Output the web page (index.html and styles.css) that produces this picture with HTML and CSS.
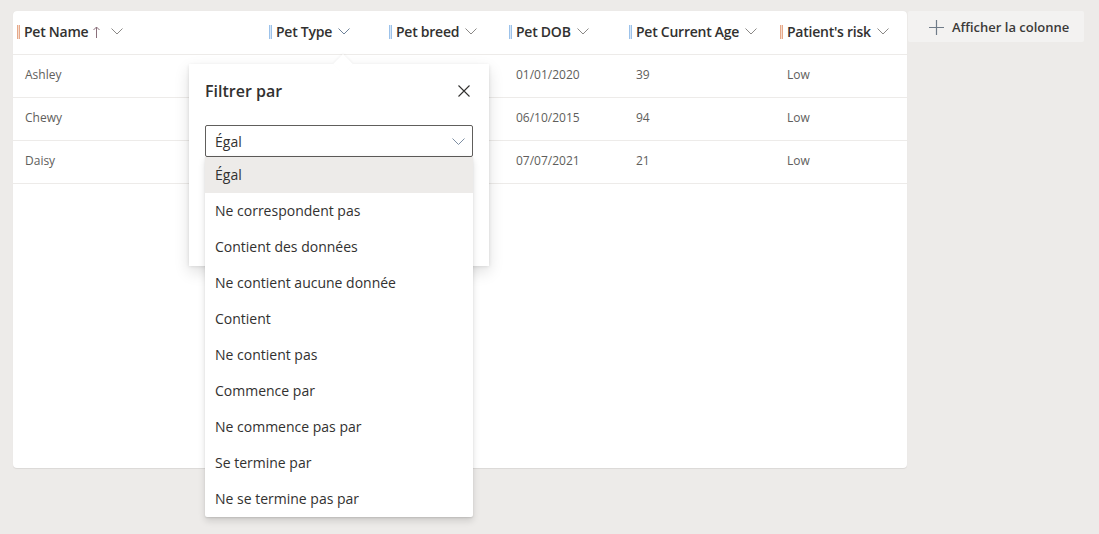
FILE: index.html
```html
<!DOCTYPE html>
<html lang="fr">
<head>
  <meta charset="UTF-8">
  <meta name="viewport" content="width=device-width, initial-scale=1.0">
  <title>Pets</title>
  <link rel="stylesheet" href="styles.css">
</head>
<body>
  <div class="page">
    <div class="grid-card">
      <div class="grid-row grid-head">
        <div class="col col-first"><span class="marker marker-warm"></span><span class="col-title">Pet Name</span>
          <svg class="sort-icon" width="7" height="12" viewBox="0 0 7 12"><path d="M3.5 1v11M0.5 4L3.5 1l3 3" fill="none" stroke="#8a6f7a" stroke-width="1"/></svg>
          <svg class="chev" width="12" height="7" viewBox="0 0 12 7"><path d="M0.5 0.5l5.5 5.5 5.5-5.5" fill="none" stroke="#8a8886" stroke-width="1"/></svg>
        </div>
        <div class="col"><span class="marker marker-cool"></span><span class="col-title">Pet Type</span>
          <svg class="chev" width="12" height="7" viewBox="0 0 12 7"><path d="M0.5 0.5l5.5 5.5 5.5-5.5" fill="none" stroke="#6e8299" stroke-width="1"/></svg>
        </div>
        <div class="col"><span class="marker marker-cool"></span><span class="col-title">Pet breed</span>
          <svg class="chev" width="12" height="7" viewBox="0 0 12 7"><path d="M0.5 0.5l5.5 5.5 5.5-5.5" fill="none" stroke="#8a8886" stroke-width="1"/></svg>
        </div>
        <div class="col"><span class="marker marker-cool"></span><span class="col-title">Pet DOB</span>
          <svg class="chev" width="12" height="7" viewBox="0 0 12 7"><path d="M0.5 0.5l5.5 5.5 5.5-5.5" fill="none" stroke="#8a8886" stroke-width="1"/></svg>
        </div>
        <div class="col"><span class="marker marker-cool"></span><span class="col-title">Pet Current Age</span>
          <svg class="chev" width="12" height="7" viewBox="0 0 12 7"><path d="M0.5 0.5l5.5 5.5 5.5-5.5" fill="none" stroke="#8a8886" stroke-width="1"/></svg>
        </div>
        <div class="col"><span class="marker marker-warm"></span><span class="col-title">Patient's risk</span>
          <svg class="chev" width="12" height="7" viewBox="0 0 12 7"><path d="M0.5 0.5l5.5 5.5 5.5-5.5" fill="none" stroke="#8a8886" stroke-width="1"/></svg>
        </div>
      </div>

      <div class="grid-row">
        <div class="cell cell-first">Ashley</div><div class="cell"></div><div class="cell"></div>
        <div class="cell">01/01/2020</div><div class="cell">39</div><div class="cell">Low</div>
      </div>
      <div class="grid-row">
        <div class="cell cell-first">Chewy</div><div class="cell"></div><div class="cell"></div>
        <div class="cell">06/10/2015</div><div class="cell">94</div><div class="cell">Low</div>
      </div>
      <div class="grid-row">
        <div class="cell cell-first">Daisy</div><div class="cell"></div><div class="cell"></div>
        <div class="cell">07/07/2021</div><div class="cell">21</div><div class="cell">Low</div>
      </div>

      <!-- filter callout opened from the Pet Type column -->
      <div class="callout">
        <div class="callout-beak"></div>
        <div class="callout-head">
          <span class="callout-title">Filtrer par</span>
          <svg class="close-icon" width="12" height="12" viewBox="0 0 12 12"><path d="M0.5 0.5l11 11M11.5 0.5l-11 11" fill="none" stroke="#323130" stroke-width="1.1"/></svg>
        </div>
        <div class="dropdown">
          <div class="dropdown-field">
            <span>Égal</span>
            <svg width="13" height="7" viewBox="0 0 13 7"><path d="M0.5 0.5l6 6 6-6" fill="none" stroke="#7d8ea3" stroke-width="1"/></svg>
          </div>
          <ul class="dropdown-list">
            <li class="selected">Égal</li>
            <li>Ne correspondent pas</li>
            <li>Contient des données</li>
            <li>Ne contient aucune donnée</li>
            <li>Contient</li>
            <li>Ne contient pas</li>
            <li>Commence par</li>
            <li>Ne commence pas par</li>
            <li>Se termine par</li>
            <li>Ne se termine pas par</li>
          </ul>
        </div>
      </div>
    </div>

    <button class="add-column">
      <svg width="15" height="15" viewBox="0 0 15 15"><path d="M7.5 0v15M0 7.5h15" fill="none" stroke="#6f7b88" stroke-width="1.2"/></svg>
      <span>Afficher la colonne</span>
    </button>
  </div>
</body>
</html>
```

FILE: styles.css
```css
/* Page */
body {
  margin: 0;
  background-color: #edebe9;
  font-family: 'Segoe UI', 'Open Sans', sans-serif;
  color: #323130;
}

.page {
  display: flex;
  align-items: flex-start;
  min-height: 534px;
  box-sizing: border-box;
  padding: 11px 0 0 13px;
}

/* Grid card */
.grid-card {
  position: relative;
  width: 894px;
  height: 457px;
  background-color: #fff;
  border-radius: 4px;
  box-shadow: 0 0.3px 0.9px rgba(0, 0, 0, 0.08);
}

.grid-row {
  display: grid;
  grid-template-columns: 256px 120px 120px 120px 151px 127px;
  height: 42px;
  border-bottom: 1px solid #edebe9;
}

.grid-head {
  height: 43px;
}

.col {
  display: flex;
  align-items: center;
  padding-bottom: 2px;
  font-size: 14px;
  font-weight: 600;
  color: #323130;
  letter-spacing: -0.25px;
}

.col-first {
  padding-left: 4px;
}

.marker {
  width: 3px;
  height: 14px;
  margin-right: 4px;
  box-sizing: border-box;
  border-left: 1px solid;
  border-right: 1px solid;
}

.marker-warm {
  border-color: #e6a98a;
  background-color: #f6dccd;
}

.marker-cool {
  border-color: #9cc2ea;
  background-color: #d6e6f7;
}

.sort-icon {
  margin-left: 5px;
}

.chev {
  margin-left: 6px;
}

.col-first .chev {
  margin-left: 11px;
}

.cell {
  display: flex;
  align-items: center;
  padding-left: 7px;
  padding-bottom: 3px;
  font-size: 12px;
  color: #605e5c;
}

.cell-first {
  padding-left: 12px;
}

/* Filter callout */
.callout {
  position: absolute;
  left: 176px;
  top: 53px;
  width: 300px;
  height: 202px;
  box-sizing: border-box;
  padding: 0 16px;
  background-color: #fff;
  box-shadow: 0 6.4px 14.4px rgba(0, 0, 0, 0.13), 0 1.2px 3.6px rgba(0, 0, 0, 0.11);
}

.callout-beak {
  position: absolute;
  left: 147px;
  top: -7px;
  width: 14px;
  height: 14px;
  background-color: #fff;
  transform: rotate(45deg);
  box-shadow: -1px -1px 2px rgba(0, 0, 0, 0.04);
}

.callout-head {
  position: relative;
  display: flex;
  justify-content: space-between;
  align-items: center;
  height: 54px;
  padding-right: 3px;
}

.callout-title {
  font-size: 16px;
  font-weight: 600;
  padding-bottom: 1px;
}

.dropdown {
  position: relative;
  margin-top: 7px;
}

.dropdown-field {
  display: flex;
  justify-content: space-between;
  align-items: center;
  height: 32px;
  box-sizing: border-box;
  padding: 0 7px 0 9px;
  border: 1px solid #605e5c;
  border-radius: 2px;
  font-size: 14px;
}

.dropdown-list {
  position: absolute;
  left: 0;
  right: 0;
  top: 32px;
  margin: 0;
  padding: 0;
  list-style: none;
  background-color: #fff;
  box-shadow: 0 3.2px 7.2px rgba(0, 0, 0, 0.13), 0 0.6px 1.8px rgba(0, 0, 0, 0.11);
  border-radius: 0 0 2px 2px;
}

.dropdown-list li {
  height: 36px;
  line-height: 36px;
  padding-left: 10px;
  font-size: 14px;
  color: #323130;
}

.dropdown-list li.selected {
  background-color: #edebe9;
}

/* Show column button */
.add-column {
  display: flex;
  align-items: center;
  gap: 8px;
  height: 31px;
  width: 176px;
  margin-left: 1px;
  padding: 1px 0 0 21px;
  border: none;
  border-radius: 2px;
  background-color: #f3f2f1;
  font-family: inherit;
  font-size: 13px;
  font-weight: 600;
  color: #3b3a39;
}
```
